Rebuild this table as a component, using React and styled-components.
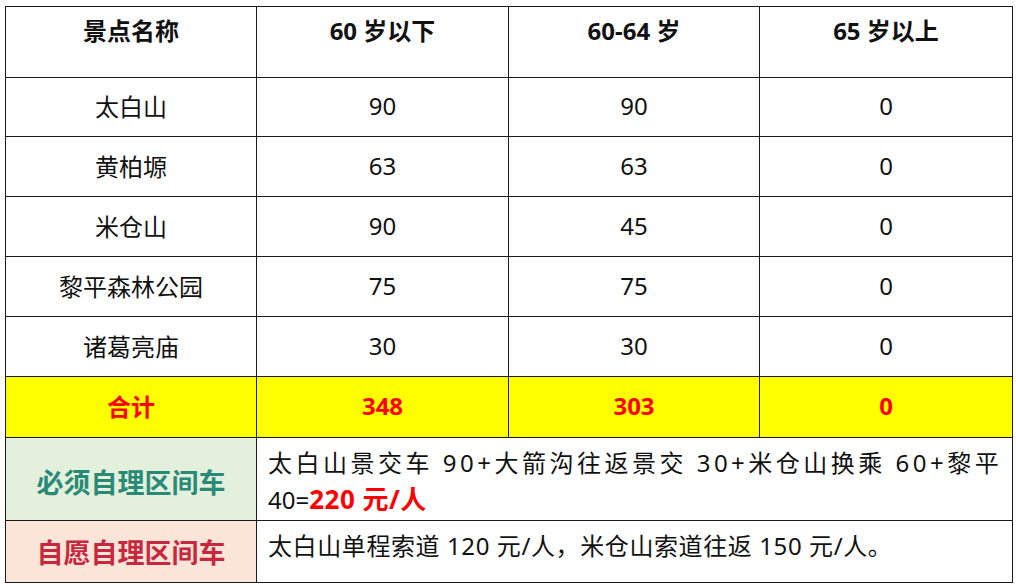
import React from 'react'
import styled, { createGlobalStyle } from 'styled-components'

const GlobalStyle = createGlobalStyle`
  body {
    margin: 0;
    background: #ffffff;
    font-family: "Noto Sans", "Noto Sans CJK SC", sans-serif;
    color: #111111;
  }
`

const Page = styled.div`
  padding: 6px 0 0 5px;
`

const Table = styled.table`
  border-collapse: collapse;
  width: 1007px;
  table-layout: fixed;
`

const Cell = styled.td`
  border: 1.5px solid #1a1a1a;
  text-align: center;
  vertical-align: middle;
  font-size: 24px;
  height: ${(p) => p.$h || 56}px;
  padding: 0 0 3px;
  background: ${(p) => p.$bg || 'transparent'};
  color: ${(p) => p.$color || '#111111'};
  font-weight: ${(p) => (p.$bold ? 700 : 400)};
`

const HeadCell = styled.th`
  border: 1.5px solid #1a1a1a;
  text-align: center;
  vertical-align: top;
  font-size: 24px;
  font-weight: 700;
  height: 71px;
  padding: 5px 0 0;
  box-sizing: border-box;
`

const Label = styled.td`
  border: 1.5px solid #1a1a1a;
  text-align: center;
  vertical-align: middle;
  font-size: 27px;
  font-weight: 700;
  height: ${(p) => p.$h}px;
  padding: ${(p) => p.$pad || '0'};
  background: ${(p) => p.$bg};
  color: ${(p) => p.$color};
`

const Note = styled.td`
  border: 1.5px solid #1a1a1a;
  vertical-align: top;
  text-align: left;
  font-size: 24px;
  line-height: 37px;
  padding: ${(p) => p.$pad || '8px 10px 0 11px'};
  white-space: nowrap;
  letter-spacing: ${(p) => p.$spacing || 0}px;
`

const Spread = styled.span`
  letter-spacing: 3.5px;
`

const Price = styled.span`
  color: #ff0000;
  font-weight: 700;
  font-size: 26px;
  letter-spacing: 0.5px;
`

const rows = [
  ['太白山', '90', '90', '0'],
  ['黄柏塬', '63', '63', '0'],
  ['米仓山', '90', '45', '0'],
  ['黎平森林公园', '75', '75', '0'],
  ['诸葛亮庙', '30', '30', '0'],
]

export default function App() {
  return (
    <Page>
      <GlobalStyle />
      <Table>
        <colgroup>
          <col style={{ width: 251 }} />
          <col style={{ width: 252 }} />
          <col style={{ width: 251 }} />
          <col style={{ width: 253 }} />
        </colgroup>
        <thead>
          <tr>
            <HeadCell>景点名称</HeadCell>
            <HeadCell>60 岁以下</HeadCell>
            <HeadCell>60-64 岁</HeadCell>
            <HeadCell>65 岁以上</HeadCell>
          </tr>
        </thead>
        <tbody>
          {rows.map((r, i) => (
            <tr key={r[0]}>
              {r.map((v, j) => (
                <Cell key={j} $h={i === 0 ? 55 : 56}>
                  {v}
                </Cell>
              ))}
            </tr>
          ))}
          <tr>
            <Cell $h={57} $bg="#ffff00" $color="#ff0000" $bold>合计</Cell>
            <Cell $h={57} $bg="#ffff00" $color="#ff0000" $bold>348</Cell>
            <Cell $h={57} $bg="#ffff00" $color="#ff0000" $bold>303</Cell>
            <Cell $h={57} $bg="#ffff00" $color="#ff0000" $bold>0</Cell>
          </tr>
          <tr>
            <Label $h={78} $bg="#e3f0dc" $color="#2a8a78" $pad="4px 0 0">必须自理区间车</Label>
            <Note colSpan={3} $pad="6px 10px 0 11px">
              <Spread>太白山景交车 90+大箭沟往返景交 30+米仓山换乘 60+黎平</Spread>
              <br />
              40=<Price>220 元/人</Price>
            </Note>
          </tr>
          <tr>
            <Label $h={61} $bg="#fbe5d8" $color="#c8283e">自愿自理区间车</Label>
            <Note colSpan={3} $pad="6px 10px 0 11px" $spacing={0.6}>
              太白山单程索道 120 元/人，米仓山索道往返 150 元/人。
            </Note>
          </tr>
        </tbody>
      </Table>
    </Page>
  )
}
